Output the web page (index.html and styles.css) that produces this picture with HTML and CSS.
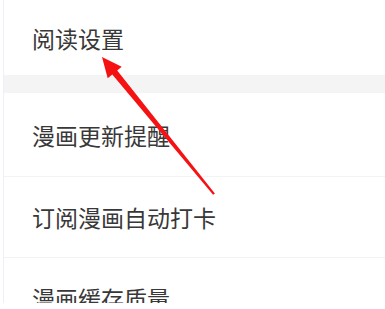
FILE: index.html
```html
<!DOCTYPE html>
<html lang="zh-CN">
<head>
  <meta charset="UTF-8" />
  <meta name="viewport" content="width=device-width, initial-scale=1.0" />
  <title>设置</title>
  <link rel="stylesheet" href="styles.css">
</head>
<body>
  <div class="screen">
    <div class="row row-first">阅读设置</div>
    <div class="gap"></div>
    <div class="group">
      <div class="row">漫画更新提醒</div>
      <div class="row">订阅漫画自动打卡</div>
      <div class="row">漫画缓存质量</div>
    </div>

    <svg class="arrow" width="385" height="309" viewBox="0 0 385 309">
      <polygon points="102,57 121.7,66.8 117.2,70.4 214.9,193.5 213.1,194.7 112.3,74.6 107.7,78.3" />
    </svg>
  </div>
</body>
</html>
```

FILE: styles.css
```css
body {
  margin: 0;
  padding: 0;
  background: #ffffff;
  font-family: "Noto Sans CJK SC", "Noto Sans", sans-serif;
}

.screen {
  position: relative;
  height: 303px;
  margin-left: 3px;
  border-left: 1px solid #edf1f6;
  overflow: hidden;
}

.row {
  display: flex;
  align-items: center;
  height: 80px;
  padding-left: 28px;
  font-size: 23px;
  color: #383838;
}

.row-first {
  height: 75px;
}

.gap {
  height: 18px;
  background: #f4f4f4;
}

.group .row:first-child {
  height: 83px;
}

.group .row + .row {
  border-top: 1px solid #f3f3f3;
}

.arrow {
  position: absolute;
  left: -4px;
  top: 0;
}

.arrow polygon {
  fill: #f51212;
}
```
